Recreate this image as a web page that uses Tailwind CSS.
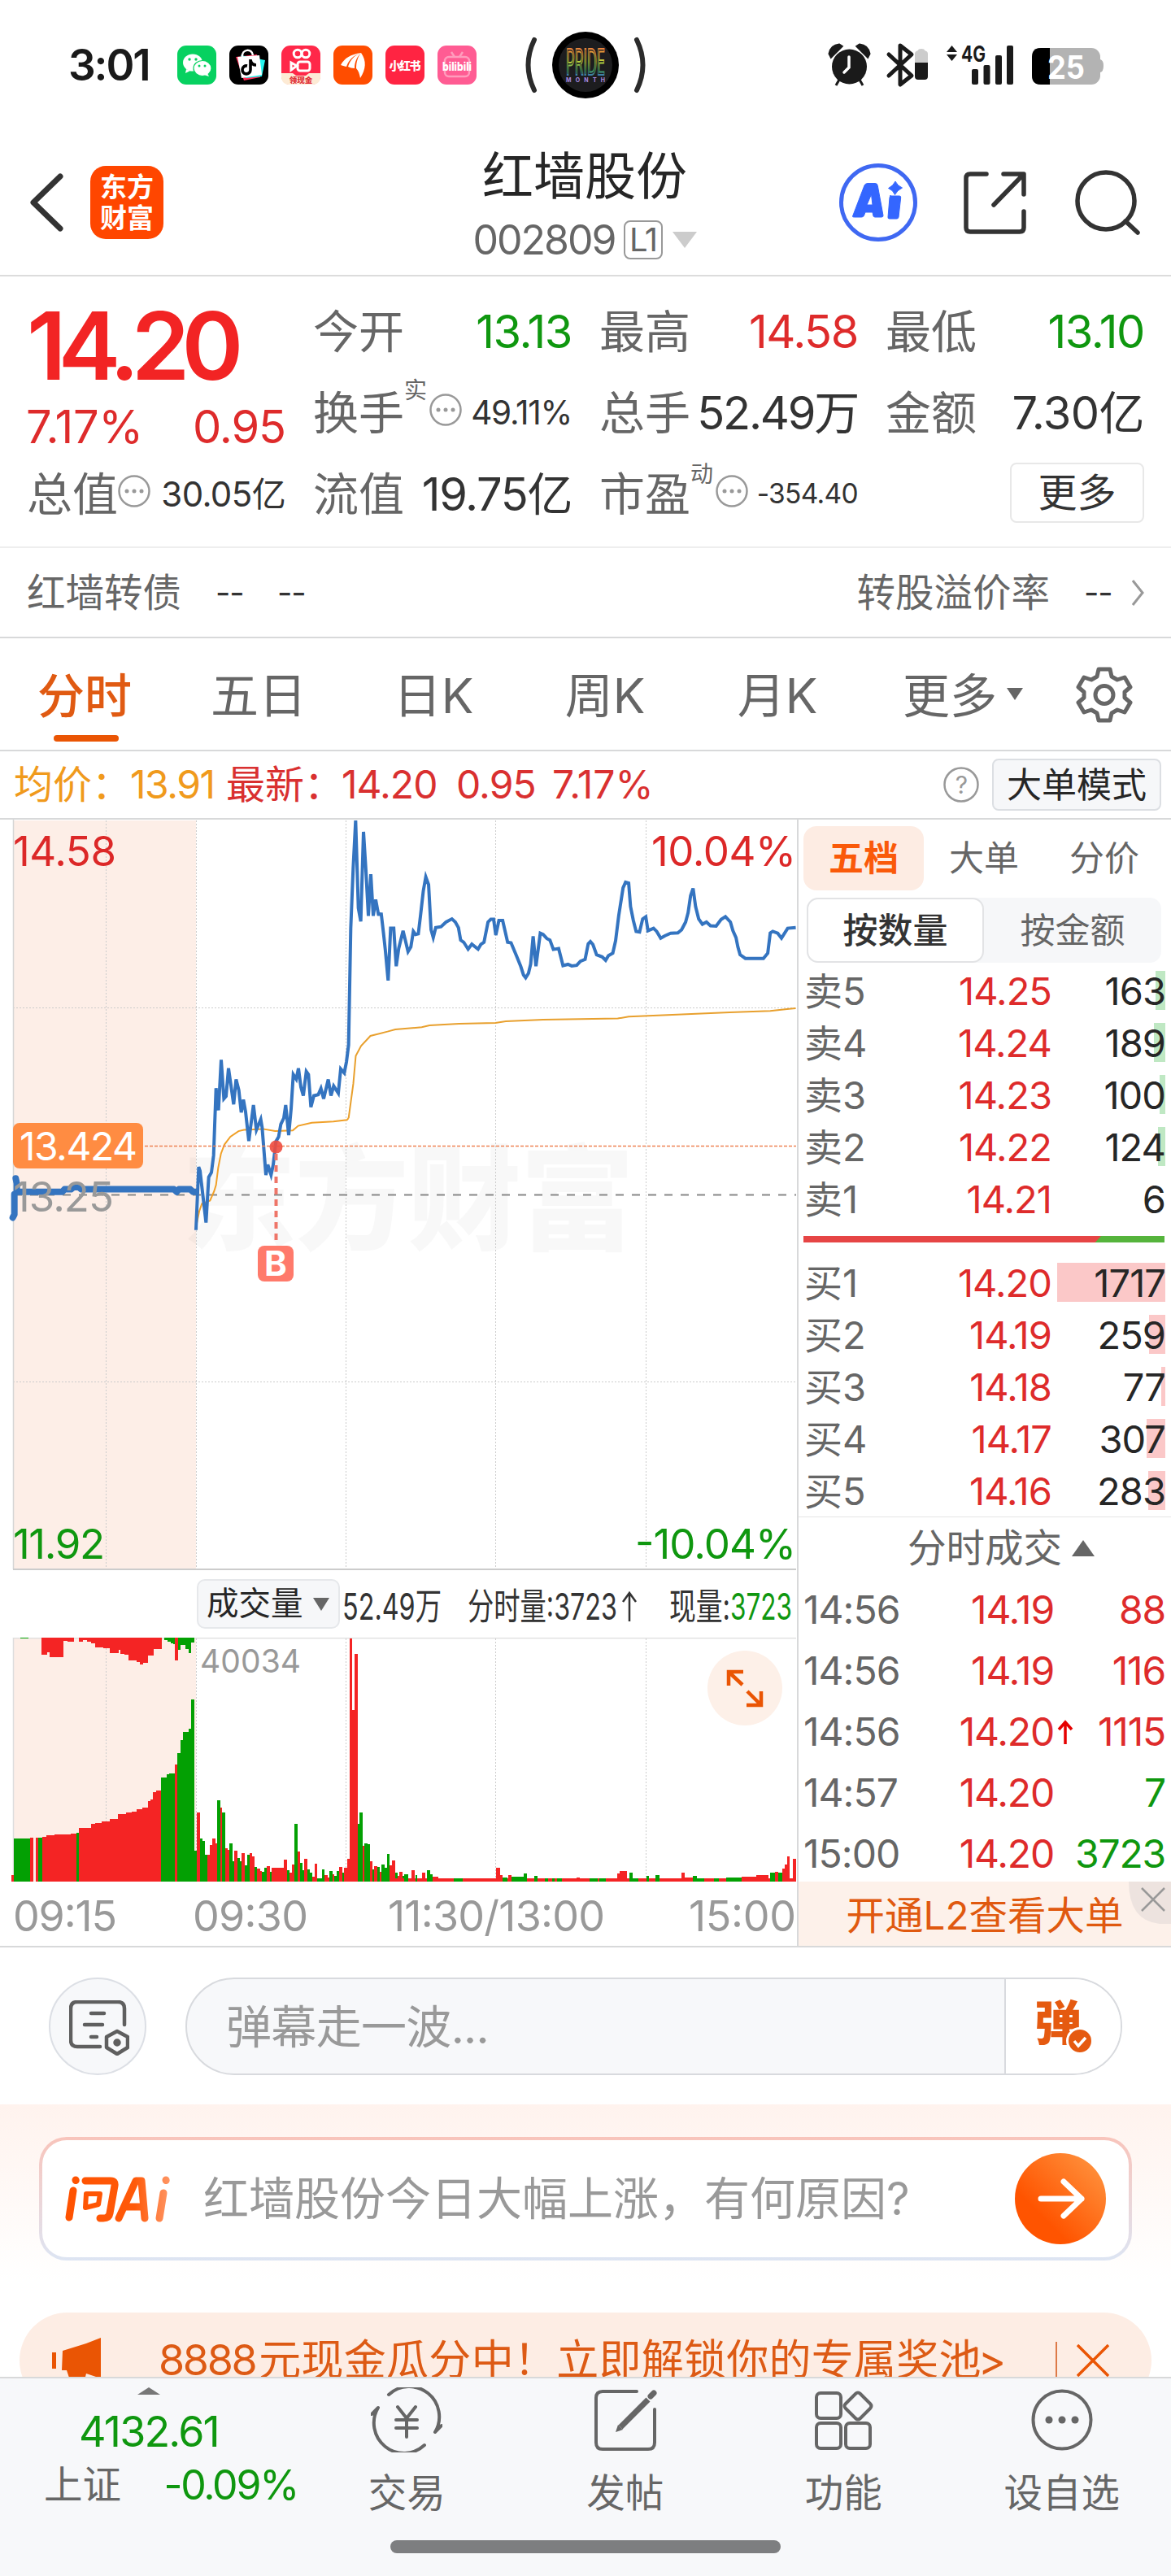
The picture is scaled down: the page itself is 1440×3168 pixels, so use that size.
<!DOCTYPE html>
<html lang="zh-CN">
<head>
<meta charset="utf-8">
<title>红墙股份 002809</title>
<script src="https://cdn.jsdelivr.net/npm/@tailwindcss/browser@4"></script>
</head>
<body class="w-[1440px] bg-white font-['Inter','Noto_Sans_CJK_SC',sans-serif] text-[#666] leading-none whitespace-nowrap">
<div class="flex h-[3168px] w-[1440px] flex-col overflow-hidden">

<!-- status bar -->
<header class="flex h-40 shrink-0 items-center pl-[84px]">
  <div class="w-[134px] text-[53px] font-semibold tracking-[-0.04em] text-[#1a1a1a]">3:01</div>
  <div class="flex gap-4">
    <svg class="size-12" viewBox="0 0 48 48"><rect width="48" height="48" rx="11" fill="#07d160"/><ellipse cx="19" cy="21" rx="12" ry="10.5" fill="#fff"/><path d="M11 29l-1 5 6-3z" fill="#fff"/><ellipse cx="31" cy="28" rx="11" ry="9.5" fill="#fff" stroke="#07d160" stroke-width="1.2"/><path d="M37 34l2 4-6-2z" fill="#fff"/><g fill="#07d160"><circle cx="15" cy="17" r="1.7"/><circle cx="23" cy="17" r="1.7"/><circle cx="27" cy="25" r="1.5"/><circle cx="34" cy="25" r="1.5"/></g></svg>
    <svg class="size-12" viewBox="0 0 48 48"><rect width="48" height="48" rx="11" fill="#000"/><path d="M8 14l26-3 4 28-20 4z" fill="#fe2c55"/><path d="M14 12l30 6-4 20-20 2z" fill="#25f4ee"/><path d="M10 14l27-2 3 24-25 4z" fill="#fff"/><path d="M16 14c-1-10 12-11 13-2" fill="none" stroke="#fff" stroke-width="2.5"/><path d="M26 17v13a5 5 0 1 1-4-5M26 18c1 4 3 6 7 6" fill="none" stroke="#000" stroke-width="3.6"/></svg>
    <svg class="size-12" viewBox="0 0 48 48"><rect width="48" height="48" rx="11" fill="#ff2849"/><path d="M0 34h14l4 3h12l4-3h14v5c0 5-4 9-9 9H9c-5 0-9-4-9-9z" fill="#fdebd5"/><g fill="none" stroke="#fff" stroke-width="3"><circle cx="20" cy="10" r="4.8"/><circle cx="30" cy="10" r="4.8"/><rect x="20" y="20" width="15" height="11" rx="3"/><path d="M19 25l-7-4v9z"/></g><text x="24" y="45.500" text-anchor="middle" font-size="9.500" font-weight="900" fill="#e0303a">领现金</text></svg>
    <svg class="size-12" viewBox="0 0 48 48"><rect width="48" height="48" rx="11" fill="#ff4d00"/><path d="M9 24c5-9 12-13 25-15-9 3-15 8-18 17-3-1-5-1-7-2zM18 26c3-9 8-14 16-17-5 5-8 11-8 19-3 0-6-1-8-2zM28 28c0-8 2-14 6-19 7 10 6 20-1 31-1-5-2-9-5-12z" fill="#fff"/></svg>
    <svg class="size-12" viewBox="0 0 48 48"><rect width="48" height="48" rx="11" fill="#ff2442"/><text x="24" y="30" text-anchor="middle" font-size="14" font-weight="900" fill="#fff" textLength="39">小红书</text></svg>
    <svg class="size-12" viewBox="0 0 48 48"><rect width="48" height="48" rx="11" fill="#ff5c93"/><g fill="none" stroke="#ff9cbd" stroke-width="2.5"><rect x="9" y="14" width="30" height="24" rx="5"/><path d="M17 8l4 6M31 8l-4 6"/></g><text x="24" y="31" text-anchor="middle" font-size="14" font-weight="800" fill="#fff" textLength="36" lengthAdjust="spacingAndGlyphs">bilibili</text></svg>
  </div>
  <svg class="ml-[58px] h-[84px] w-[152px]" viewBox="644 38 152 84">
    <defs><linearGradient id="pride" x1="0" y1="0" x2="0" y2="1"><stop offset="0" stop-color="#e2463f"/><stop offset=".3" stop-color="#e8a13a"/><stop offset=".5" stop-color="#b7cf3c"/><stop offset=".7" stop-color="#3f9e62"/><stop offset=".85" stop-color="#3d6fd0"/><stop offset="1" stop-color="#8a4cc0"/></linearGradient></defs>
    <path d="M657 49q-15 31 0 62M783 49q15 31 0 62" fill="none" stroke="#2b2b2b" stroke-width="6" stroke-linecap="round"/>
    <circle cx="720" cy="80" r="41" fill="#000"/><circle cx="720" cy="80" r="33" fill="#1d1d1f"/>
    <text x="696" y="92" font-size="44" textLength="48" lengthAdjust="spacingAndGlyphs" fill="#1d1d1f" stroke="url(#pride)" stroke-width="2">PRIDE</text>
    <text x="696" y="101" font-size="7" textLength="48" font-weight="700" fill="#a98be0">MONTH</text>
  </svg>
  <svg class="ml-[215px] h-[60px] w-[360px]" viewBox="1010 50 360 60">
    <g fill="#1a1a1a">
      <circle cx="1043.500" cy="82" r="21.500"/><path d="M1019 66q2-10 12-11l3 2-13 13zM1068 66q-2-10-12-11l-3 2 13 13zM1031 98l-4 7M1056 98l4 7" stroke="#1a1a1a" stroke-width="3"/>
      <path d="M1043 70v13l-6 6" stroke="#fff" stroke-width="3.500" fill="none" stroke-linecap="round"/>
      <path d="M1092 67l28 26-14 11V56l14 11-28 26" fill="none" stroke="#1a1a1a" stroke-width="5" stroke-linejoin="round" stroke-linecap="round"/>
      <path d="M1124 66q0-3 4-4 0-2 4-2t4 2q4 1 4 4v12h-16z" fill="#ccc"/><path d="M1124 77h16v17q0 4-4 4h-8q-4 0-4-4z"/>
      <path d="M1163 64l6.500-8 6.500 8zM1163 67h13l-6.500 8z"/>
      <text x="1181" y="76" font-size="27" font-weight="700" textLength="30" lengthAdjust="spacingAndGlyphs">4G</text>
      <rect x="1194" y="85" width="8" height="19" rx="2"/><rect x="1208.500" y="80" width="8" height="24" rx="2"/><rect x="1223" y="68" width="8" height="36" rx="2"/><rect x="1237" y="56" width="8" height="48" rx="2"/>
    </g>
    <rect x="1268" y="59" width="84" height="45" rx="11" fill="#b3b3b3"/><path d="M1352 73q4 1 4 8t-4 8z" fill="#b3b3b3"/><path d="M1290 59h-11q-11 0-11 11v23q0 11 11 11h11z" fill="#000"/>
    <text x="1287" y="97" font-size="40" font-weight="700" textLength="46" lengthAdjust="spacingAndGlyphs" fill="#fff">25</text>
  </svg>
</header>

<!-- title bar -->
<nav class="grid h-[180px] shrink-0 grid-cols-[1fr_auto_1fr] items-center border-b-2 border-[#dcdcdc] pr-[38px] pl-9">
  <div class="flex items-center gap-[33px]">
    <svg class="h-[76px] w-[42px]" viewBox="0 0 42 76" fill="none" stroke="#333" stroke-width="7" stroke-linecap="round" stroke-linejoin="round"><path d="M38 6L5 38l33 32"/></svg>
    <div class="grid size-[90px] place-content-center rounded-[19px] bg-[#ff4600] text-[33px] leading-[38px] font-bold text-white"><span>东方</span><span>财富</span></div>
  </div>
  <div class="flex flex-col items-center pt-[11px]">
    <h1 class="flex h-20 items-center text-[63px] text-[#262626]">红墙股份</h1>
    <div class="flex h-[76px] items-center">
      <span class="text-[50px] tracking-[-0.04em]">002809</span>
      <span class="ml-2.5 flex h-12 w-12 items-center justify-center rounded-lg border-2 border-[#999] text-[40px] tracking-[-0.05em]">L1</span>
      <svg class="ml-3 h-5 w-[30px]" viewBox="0 0 30 20"><path d="M0 0h30L15 20z" fill="#ccc"/></svg>
    </div>
  </div>
  <div class="flex items-center justify-end">
    <svg class="size-24" viewBox="0 0 96 96"><circle cx="48" cy="48" r="45.500" fill="none" stroke="#3f68f2" stroke-width="5"/><path d="M16.500 65L31 27q1-2.500 4-2.500h9q3 0 3.300 3L54 64q.2 2-2 2h-8q-2 0-2.200-2l-.8-4h-9l-1.500 4q-.8 2-3 2h-9q-2.500 0-2-1zM34 51h7l-1.500-13zM62 40h12q2 0 1.700 2L73 66q-.3 2-2.300 2h-9q-2 0-1.700-2l2-24q.2-2 2-2zM69 22q2.500 5.500 8.500 8-6.500 3-9 8.500-2-5.500-8-8 6-3 8.500-8.500z" fill="#3466ff" stroke="#3466ff" stroke-width="1" fill-rule="evenodd"/></svg>
    <svg class="ml-[57px] h-[77px] w-[78px]" viewBox="0 0 78 77" fill="none" stroke="#333" stroke-width="5.500" stroke-linecap="round" stroke-linejoin="round"><path d="M28 3H8q-5 0-5 5v61q0 5 5 5h61q5 0 5-5V49M49 3h25v25M73 4L37 41"/></svg>
    <svg class="ml-[59px] h-20 w-20" viewBox="0 0 80 80" fill="none" stroke="#333" stroke-width="5.500" stroke-linecap="round"><circle cx="38" cy="38" r="35"/><path d="M62 63l15 14"/></svg>
  </div>
</nav>

<!-- quote summary -->
<section class="grid h-[334px] shrink-0 grid-cols-4 grid-rows-[100px_100px_100px] gap-x-[34px] border-b-2 border-[#eee] px-[33px] pt-[18px] text-[56px] tracking-[-0.025em] text-[#333]">
  <div class="row-span-2">
    <div class="flex h-[134px] items-center text-[115px] font-semibold tracking-[-0.085em] text-[#f22424]">14.20</div>
    <div class="-ml-px flex h-[66px] items-center justify-between text-[#de2b2b]"><span class="tracking-[-0.005em]">7.17%</span><span class="tracking-[-0.02em]">0.95</span></div>
  </div>
  <div class="flex items-center justify-between"><span class="tracking-normal text-[#666]">今开</span><span class="tracking-[-0.025em] text-[#0f970f]">13.13</span></div>
  <div class="flex items-center justify-between"><span class="tracking-normal text-[#666]">最高</span><span class="text-[#de2b2b]">14.58</span></div>
  <div class="flex items-center justify-between"><span class="tracking-normal text-[#666]">最低</span><span class="tracking-[-0.025em] text-[#0f970f]">13.10</span></div>
  <div class="flex items-center"><span class="tracking-normal text-[#666]">换手</span><span class="mb-14 text-[28px] text-[#666]">实</span>
    <svg class="mb-2 ml-1 size-10 shrink-0" viewBox="0 0 40 40" fill="#999"><circle cx="20" cy="20" r="18.500" fill="none" stroke="#999" stroke-width="2.500"/><circle cx="11" cy="20" r="2.500"/><circle cx="20" cy="20" r="2.500"/><circle cx="29" cy="20" r="2.500"/></svg><span class="ml-auto text-[40.500px] tracking-[-0.03em]">49.11%</span></div>
  <div class="flex items-center justify-between"><span class="tracking-normal text-[#666]">总手</span><span class="tracking-[-0.04em]">52.49万</span></div>
  <div class="flex items-center justify-between"><span class="tracking-normal text-[#666]">金额</span><span class="tracking-[-0.01em]">7.30亿</span></div>
  <div class="flex items-center"><span class="tracking-normal text-[#666]">总值</span>
    <svg class="mb-2 size-10 shrink-0" viewBox="0 0 40 40" fill="#999"><circle cx="20" cy="20" r="18.500" fill="none" stroke="#999" stroke-width="2.500"/><circle cx="11" cy="20" r="2.500"/><circle cx="20" cy="20" r="2.500"/><circle cx="29" cy="20" r="2.500"/></svg><span class="ml-auto text-[42px] tracking-[-0.015em]">30.05亿</span></div>
  <div class="flex items-center justify-between"><span class="tracking-normal text-[#666]">流值</span><span>19.75亿</span></div>
  <div class="flex items-center"><span class="tracking-normal text-[#666]">市盈</span><span class="mb-[50px] text-[28px] text-[#666]">动</span>
    <svg class="mb-2 ml-1 size-10 shrink-0" viewBox="0 0 40 40" fill="#999"><circle cx="20" cy="20" r="18.500" fill="none" stroke="#999" stroke-width="2.500"/><circle cx="11" cy="20" r="2.500"/><circle cx="20" cy="20" r="2.500"/><circle cx="29" cy="20" r="2.500"/></svg><span class="ml-auto text-[33.500px] tracking-[-0.02em]">-354.40</span></div>
  <div class="flex items-center justify-end"><span class="-mt-1 flex h-[74px] w-[165px] items-center justify-center rounded-lg border-2 border-[#e8e8e8] text-[48px] tracking-normal">更多</span></div>
</section>

<!-- convertible bond -->
<section class="flex h-[111px] shrink-0 items-center border-b-2 border-[#d8d9da] pr-8 pl-[33px] text-[47.500px]">
  <span>红墙转债</span><span class="ml-[42px] w-[34px] text-[40px] tracking-[-0.03em] text-[#333]">--</span><span class="ml-[42px] w-[34px] text-[40px] tracking-[-0.03em] text-[#333]">--</span>
  <span class="ml-auto">转股溢价率</span><span class="ml-[42px] w-[34px] text-[40px] tracking-[-0.03em] text-[#333]">--</span>
  <svg class="ml-[25px] h-8 w-4" viewBox="0 0 16 32" fill="none" stroke="#999" stroke-width="3"><path d="M1 1l12 15L1 31"/></svg>
</section>

<!-- period tabs -->
<section class="flex h-[139px] shrink-0 items-center border-b-2 border-[#d8d9da] text-[59px]">
  <div class="relative flex h-full w-[212px] items-center justify-center pt-1 pr-1 text-[58px] font-medium text-[#e05a12]">分时<span class="absolute bottom-[10px] left-[66px] h-2 w-20 rounded-full bg-[#ea5504]"></span></div>
  <div class="w-[212px] pt-1 text-center">五日</div>
  <div class="w-[212px] pt-1 pl-1.5 text-center">日K</div>
  <div class="w-[212px] pt-1 pl-1 text-center">周K</div>
  <div class="w-[212px] pt-1 pl-1 text-center">月K</div>
  <div class="ml-[50px] pt-1 text-[58px]">更多</div>
  <svg class="ml-3 h-[15px] w-5" viewBox="0 0 20 15"><path d="M0 0h20L10 15z" fill="#666"/></svg>
  <svg class="mr-[47px] ml-auto size-[70px]" viewBox="0 0 70 70" fill="none" stroke="#666" stroke-width="5" stroke-linejoin="round"><path d="M28 4h14l2 9 7 4 9-3 7 12-7 6v7l7 6-7 12-9-3-7 4-2 9H28l-2-9-7-4-9 3-7-12 7-6v-7l-7-6 7-12 9 3 7-4z"/><circle cx="35" cy="35.500" r="11"/></svg>
</section>

<!-- averages line -->
<section class="flex h-[84px] shrink-0 items-center border-b-2 border-[#d8d9da] pr-3 pl-[17px] text-[48px] tracking-[-0.02em] text-[#d93030]">
  <span class="w-[143px] tracking-normal text-[#f09a1c]">均价：</span><span class="w-[118px] tracking-[-0.03em] text-[#f09a1c]">13.91</span>
  <span class="w-[142px] tracking-normal">最新：</span><span class="w-[141px]">14.20</span><span class="w-[118px]">0.95</span><span class="tracking-normal">7.17%</span>
  <svg class="mr-4 ml-auto size-11" viewBox="0 0 44 44"><circle cx="22" cy="22" r="20.500" fill="none" stroke="#999" stroke-width="2.500"/><text x="22" y="33" text-anchor="middle" font-size="30" fill="#999">?</text></svg>
  <span class="flex h-16 w-52 items-center justify-center rounded-lg border-2 border-[#dcdfe3] bg-[#f6f7f9] text-[43px] tracking-normal text-[#262626]">大单模式</span>
</section>

<!-- chart and order book -->
<section class="flex h-[1387px] shrink-0 border-b-2 border-[#d8d9da]">
  <div class="flex w-[980px] flex-col">
    <svg class="h-[923px] w-[980px] shrink-0" viewBox="0 1008 980 923" fill="none">
      <rect x="16" y="1009" width="225" height="920" fill="#fdeee7"/>
      <text x="224" y="1526" font-size="140" font-weight="900" textLength="556" fill="#000" fill-opacity=".028">东方财富</text>
      <g stroke="#ccc" stroke-width="1" stroke-dasharray="2 2"><path d="M130.500 1009v920M241.500 1009v920M425.500 1009v920M609.500 1009v920M794.500 1009v920M16 1239.500h963M16 1699.500h963"/></g>
      <path d="M16.500 1008v922" stroke="#d5d5d5" stroke-width="1.500"/><path d="M16 1930h963" stroke="#ccc" stroke-width="2"/>
      <path d="M17 1469.500h962" stroke="#888" stroke-width="2" stroke-dasharray="10 10"/>
      <g transform="translate(0 1000) scale(.33333 .38265)" stroke="#f0a028" stroke-width="2"><polyline vector-effect="non-scaling-stroke" points="723,1330 735,1280 745,1255 760,1250 775,1245 790,1215 797,1195 805,1140 815,1095 828,1065 850,1040 880,1022 900,1018 970,1015 1015,1022 1080,1020 1100,1005 1150,995 1230,991 1280,986 1286,980"/></g>
      <g transform="translate(400 1000) scale(.38265)" stroke="#e8a02e" stroke-width="2"><polyline vector-effect="non-scaling-stroke" points="75,980 90,870 98,780 115,748 145,716 200,702 225,695 310,688 335,682 430,677 547,674 580,669 700,664 940,660 975,654 1100,649 1300,640 1430,636 1490,629 1512,627"/></g>
      <g transform="translate(0 1000) scale(.33333 .38265)" stroke="#3474c0">
        <polyline vector-effect="non-scaling-stroke" stroke-width="4" points="723,1340 733,1137 738,1150 760,1316 770,1170 780,1155 788,1100 797,884 806,955 816,793 826,918 834,910 843,820 862,936 871,856 881,890 890,962 898,921 906,960 918,1054 935,938 946,1018 962,984 967,1010 981,1163 988,1130 1000,1163 1008,1130 1018,1055 1028,1040 1036,1000 1047,980 1054,938 1065,1035 1074,950 1082,840 1093,855 1101,820 1110,880 1119,908 1130,830 1138,840 1147,945 1158,908 1174,905 1184,885 1194,918 1211,856 1221,908 1231,877 1248,900 1257,822 1270,835 1278,800 1286,745 1294,370 1303,175 1312,24 1322,305 1331,348 1341,60 1350,185 1359,330 1368,196 1377,330 1386,278 1396,325 1406,325"/>
        <g stroke-width="8" stroke-linecap="round" stroke-linejoin="round"><polyline vector-effect="non-scaling-stroke" points="58,1174 62,1190 62,1217 230,1217 238,1209 262,1209 272,1202 290,1202 300,1209 642,1209 652,1217 660,1209 702,1209 712,1217 722,1217"/><polyline vector-effect="non-scaling-stroke" points="53,1225 53,1290 47,1300"/></g>
      </g>
      <g transform="translate(400 1000) scale(.38265)" stroke="#3474c0" stroke-width="4"><polyline vector-effect="non-scaling-stroke" points="168,325 180,325 187,385 193,440 202,538 210,370 220,370 228,492 236,435 250,378 266,445 275,430 283,380 290,390 299,388 306,330 315,250 323,205 332,230 340,375 347,400 355,368 372,365 388,350 407,340 418,350 428,368 435,408 445,415 459,437 471,421 491,437 500,422 510,415 523,350 532,341 541,341 548,392 558,345 570,345 586,415 597,417 615,460 628,492 637,520 644,529 653,515 660,485 668,396 677,492 691,386 700,390 712,403 722,408 733,438 750,435 764,490 780,486 792,491 808,489 820,476 835,470 845,420 852,413 860,422 872,455 890,462 901,473 910,458 924,450 933,410 943,330 957,240 965,222 975,225 981,300 990,345 999,380 1010,382 1020,340 1030,333 1037,378 1055,370 1065,380 1078,402 1092,394 1110,386 1133,385 1145,375 1158,350 1166,320 1174,265 1182,242 1190,300 1200,340 1212,357 1225,350 1238,362 1256,363 1272,342 1286,333 1302,350 1310,378 1320,400 1326,430 1333,455 1350,467 1408,467 1422,450 1430,385 1438,380 1454,386 1466,402 1486,370 1512,368"/></g>
      <path d="M16 1409.500h963" stroke="#ee8355" stroke-width="1.500" stroke-dasharray="4 2"/>
      <rect x="16" y="1381" width="160" height="56" rx="8" fill="#ff8c42"/>
      <path d="M339.500 1419v112" stroke="#ee7568" stroke-width="4" stroke-dasharray="8 6"/><circle cx="339.500" cy="1410.500" r="8" fill="#ee4b3e" fill-opacity=".9"/>
      <rect x="317" y="1532" width="44" height="44" rx="8" fill="#ff7a6b"/>
      <text x="339" y="1569" text-anchor="middle" font-size="42" font-weight="700" fill="#fff">B</text>
      <g font-size="51" lengthAdjust="spacingAndGlyphs">
        <text x="24" y="1427" font-size="48" textLength="145" fill="#fff">13.424</text>
        <text x="16" y="1490" textLength="124" fill="#999">13.25</text>
        <text x="16" y="1065" textLength="127" fill="#dc2828">14.58</text>
        <text x="801" y="1065" textLength="178" fill="#dc2828">10.04%</text>
        <text x="16" y="1917" textLength="113" fill="#0f970f">11.92</text>
        <text x="781" y="1917" textLength="198" fill="#0f970f">-10.04%</text>
      </g>
    </svg>
    <div class="flex h-[83px] shrink-0 items-center pl-[242px]">
      <div class="flex h-[61px] w-[176px] shrink-0 items-center rounded-[10px] border-2 border-[#e6e8eb] bg-[#f6f7f9] pl-2.5 text-[39.500px] text-[#262626]">成交量<svg class="ml-3 h-4 w-5" viewBox="0 0 20 16"><path d="M0 0h20L10 16z" fill="#666"/></svg></div>
      <svg class="h-[60px] w-[562px] shrink-0" viewBox="418 1942 562 60" font-size="45" fill="#333">
        <text x="421" y="1991" textLength="122" lengthAdjust="spacingAndGlyphs">52.49万</text>
        <text x="575" y="1991" textLength="184" lengthAdjust="spacingAndGlyphs">分时量:3723</text>
        <path d="M774 1993v-34M766 1969l8-11 8 11" fill="none" stroke="#333" stroke-width="2.500"/>
        <text x="823" y="1991" textLength="75" lengthAdjust="spacingAndGlyphs">现量:</text>
        <text x="898" y="1991" textLength="76" lengthAdjust="spacingAndGlyphs" fill="#0f970f">3723</text>
      </svg>
    </div>
    <svg class="h-[380px] w-[980px] shrink-0" viewBox="0 2014 980 380" fill="none">
      <rect x="16" y="2014" width="225" height="300" fill="#fdeee7"/>
      <path d="M130.500 2015v299M241.500 2015v299M425.500 2015v299M609.500 2015v299M794.500 2015v299" stroke="#ccc" stroke-dasharray="2 2"/>
      <path d="M16 2014.500h963M16.500 2014v300" stroke="#ddd" stroke-width="1.500"/>
      <g id="volume" transform="translate(0 1880) scale(.33333)" shape-rendering="crispEdges"></g>
      <circle cx="916" cy="2076" r="46" fill="#fdf0e8"/>
      <path d="M896 2073v-17h18M897 2057l16 15M936 2080v17h-18M935 2096l-16-16" stroke="#ea5504" stroke-width="4.500"/>
      <g fill="#999" font-size="52" lengthAdjust="spacingAndGlyphs">
        <text x="246" y="2057" font-size="39" textLength="124">40034</text>
        <text x="16" y="2375" textLength="128">09:15</text><text x="237" y="2375" textLength="142">09:30</text><text x="477" y="2375" textLength="267">11:30/13:00</text><text x="847" y="2375" textLength="132">15:00</text>
      </g>
    </svg>
  </div>

  <aside class="flex w-[460px] flex-col border-l-2 border-[#d8d9da]">
    <div class="mt-2 flex h-[79px] text-[43px]">
      <span class="ml-1.5 flex w-[148px] items-center justify-center rounded-2xl bg-[#fdece3] font-bold text-[#fa5a0a]">五档</span>
      <span class="flex w-[148px] items-center justify-center">大单</span><span class="flex w-[148px] items-center justify-center">分价</span>
    </div>
    <div class="mt-[9px] ml-2.5 flex h-20 w-[436px] rounded-[14px] bg-[#f6f7f9] text-[43px]">
      <span class="flex w-[218px] items-center justify-center rounded-[14px] border-2 border-[#e2e3e5] bg-white font-medium text-[#333]">按数量</span><span class="flex w-[218px] items-center justify-center">按金额</span>
    </div>
    <div id="asks" class="mt-0.5 pl-[7px]"></div>
    <div class="mt-[14px] ml-1.5 flex h-2 w-[444px] bg-[#55b43c]"><span class="w-[366px] bg-[#e64545] [clip-path:polygon(0_0,100%_0,98%_100%,0_100%)]"></span></div>
    <div id="bids" class="mt-[17px] pl-[7px]"></div>
    <div class="flex h-[76px] items-center border-t border-[#e5e5e5] pl-[134px] text-[47.500px]">分时成交<svg class="ml-3 h-5 w-7" viewBox="0 0 28 20"><path d="M0 20h28L14 0z" fill="#666"/></svg></div>
    <div id="trades" class="h-[373px] pl-1.5"></div>
    <div class="relative flex h-[79px] items-center justify-center bg-[#fdf1ea] text-[47.500px] text-[#e0590f]"><span class="mt-1">开通L2查看大单</span>
      <svg class="absolute top-0 right-0 size-[52px]" viewBox="0 0 52 52" fill="none"><path d="M0 0h52v52h-14Q0 48 0 0z" fill="#ede3df"/><path d="M16 8l28 28M44 8L16 36" stroke="#999" stroke-width="2.500"/></svg></div>
  </aside>
</section>

<!-- comment bar -->
<section class="flex h-[193px] shrink-0 items-start pt-[37px] pl-[60px]">
  <div class="flex size-[120px] items-center justify-center rounded-full border-2 border-[#dcdfe5] bg-[#f7f8fa]">
    <svg class="mt-1 ml-1 h-[68px] w-[74px]" viewBox="0 0 74 68" fill="none" stroke="#5f5f5f" stroke-width="4.500" stroke-linecap="round"><path d="M38 57H10q-8 0-8-8V10q0-8 8-8h50q8 0 8 8v20M27 16h16M19 30h22M27 45h7"/><path d="M59 38l13 7v13l-13 8-13-8V45z" stroke-linejoin="round"/><circle cx="59" cy="52" r="2.500" fill="#5f5f5f"/></svg>
  </div>
  <div class="ml-12 flex h-[120px] w-[1152px] overflow-hidden rounded-full border-2 border-[#d8dade] bg-[#f7f8fa]">
    <span class="flex flex-1 items-center pt-0.5 pl-12 text-[56px] tracking-[-0.012em] text-[#999]">弹幕走一波...</span>
    <span class="flex w-[143px] items-center border-l-2 border-[#d8dade] bg-white pl-9">
      <svg class="h-[70px] w-[72px]" viewBox="0 0 72 70"><text x="-1" y="52" font-size="58" font-weight="900" fill="#e55a10">弹</text><circle cx="55" cy="53" r="15.500" fill="#e55a10" stroke="#fff" stroke-width="3"/><path d="M48 53l5 6 9-10" fill="none" stroke="#fff" stroke-width="3.500"/></svg>
    </span>
  </div>
</section>

<!-- AI question and promotion -->
<section class="h-[335px] shrink-0 overflow-hidden bg-linear-to-b from-[#fff3ee] to-white to-65% px-6 pt-10">
  <div class="mx-6 h-[152px] rounded-[34px] bg-linear-to-b from-[#f8c4bb] to-[#dde5f3] p-1">
    <div class="flex h-full items-center rounded-[30px] bg-white px-7">
      <svg class="h-[60px] w-[132px]" viewBox="0 0 132 60"><defs><linearGradient id="ask" gradientUnits="userSpaceOnUse" x1="0" y1="0" x2="132" y2="0"><stop offset="0" stop-color="#ff5200"/><stop offset=".65" stop-color="#ff5a0a"/><stop offset="1" stop-color="#ff9a6a"/></linearGradient></defs><g fill="none" stroke="url(#ask)" stroke-width="9" stroke-linecap="round" stroke-linejoin="round"><path d="M10 20L5 53M13 7l.2 .5M25 8h31q6 0 5 6l-6 34q-1 6-8 6h-4"/><path d="M26 24h17l-2 13-16 4z" stroke-width="6"/><path d="M66 54L87 8h7l4 46M76 40h20" stroke-width="9"/><path d="M121 23l-5 31M124 7l.2 .5"/></g></svg>
      <span class="ml-[38px] text-[56px] text-[#999]">红墙股份今日大幅上涨，有何原因?</span>
      <svg class="ml-auto size-28" viewBox="0 0 112 112"><defs><linearGradient id="go" x1="1" y1="0" x2=".3" y2=".7"><stop offset="0" stop-color="#ff9a45"/><stop offset="1" stop-color="#ff5400"/></linearGradient></defs><circle cx="56" cy="56" r="56" fill="url(#go)"/><path d="M32 56h50M60 35l22 21-22 21" fill="none" stroke="#fff" stroke-width="7" stroke-linecap="round" stroke-linejoin="round"/></svg>
    </div>
  </div>
  <div class="mt-16 flex h-[118px] items-center rounded-full bg-[#fdede4] pr-[52px] pl-10 text-[52px] text-[#dd5a14]">
    <svg class="h-[56px] w-[60px]" viewBox="0 0 60 56" fill="#ea5504"><path d="M0 18h5v20H0zM13 16L42 7 60 0v50l-18-6-2 8H22l-4-12h-6z"/></svg>
    <span class="ml-[71px] tracking-[-0.045em]">8888</span><span class="ml-1 tracking-[0.005em]">元现金瓜分中！立即解锁你的专属奖池</span><span class="-ml-1">&gt;</span>
    <span class="ml-auto h-[46px] w-0.5 bg-[#dd7a48]"></span>
    <svg class="ml-6 size-10" viewBox="0 0 40 40" stroke="#ea5504" stroke-width="3.500"><path d="M1 1l38 38M39 1L1 39"/></svg>
  </div>
</section>

<!-- bottom navigation -->
<footer class="relative flex flex-1 border-t-2 border-[#d8d9da] bg-[#f7f8fa] text-[47.500px]">
  <div class="flex w-[366px] flex-col items-center pt-[11px]">
    <svg class="h-[9px] w-7" viewBox="0 0 28 9"><path d="M0 9h28L14 0z" fill="#777"/></svg>
    <div class="mt-5 text-[52px] tracking-[-0.035em] text-[#0f970f]">4132.61</div>
    <div class="mt-3.5 ml-[54px] flex w-[312px] items-center justify-between"><span>上证</span><span class="text-[50px] tracking-[-0.045em] text-[#0f970f]">-0.09%</span></div>
  </div>
  <div class="flex w-[268.500px] flex-col items-center gap-[26px] pt-[11px]">
    <svg class="h-20 w-[88px]" viewBox="0 0 88 80" fill="none" stroke="#666" stroke-width="4" stroke-linecap="round" stroke-linejoin="round"><path d="M22 9A37 37 0 0 1 79 55l8-8M66 71A37 37 0 0 1 9 25l-8 8M33 24l11 14 11-14M44 38v23M31 40h26M31 50h26"/></svg>交易</div>
  <div class="flex w-[268.500px] flex-col items-center gap-[26px] pt-[11px]">
    <svg class="size-20" viewBox="0 0 80 80" fill="none" stroke="#666" stroke-width="4" stroke-linecap="round"><path d="M54 5H12q-8 0-8 8v55q0 8 8 8h56q8 0 8-8V27"/><path d="M68 15L34 49" stroke-width="7" stroke-linecap="butt"/><path d="M31 46l6 6-9 3z" fill="#666" stroke="none"/><path d="M71 11l4-4" stroke-width="7"/></svg>发帖</div>
  <div class="flex w-[268.500px] flex-col items-center gap-[26px] pt-[11px]">
    <svg class="size-20" viewBox="0 0 80 80" fill="none" stroke="#666" stroke-width="4" stroke-linejoin="round"><rect x="7" y="7" width="30" height="31" rx="5"/><rect x="7" y="44" width="30" height="31" rx="5"/><rect x="43" y="44" width="30" height="31" rx="5"/><path d="M55 8q3-3 6 0l12 12q3 3 0 6L61 38q-3 3-6 0L43 26q-3-3 0-6z"/></svg>功能</div>
  <div class="flex w-[268.500px] flex-col items-center gap-[26px] pt-[11px]">
    <svg class="size-20" viewBox="0 0 80 80" fill="#666"><circle cx="40" cy="40" r="35.500" fill="none" stroke="#666" stroke-width="4"/><circle cx="24" cy="40" r="4.500"/><circle cx="40" cy="40" r="4.500"/><circle cx="56" cy="40" r="4.500"/></svg>设自选</div>
  <div class="absolute bottom-7 left-[480px] h-4 w-[480px] rounded-full bg-[#7d7e80]"></div>
</footer>
</div>

<script>
const RED = '#f42424', GREEN = '#03a003';
// hanging bars: unmatched auction volume [colour, x0, x1, bottom]
const hang = 'g75-105:405 r152-173:465 r173-182:457 r182-234:473 r234-250:414 r250-273:416 r292-305:417 r305-320:411 r320-335:418 r335-350:423 r350-380:437 r380-405:440 r405-437:459 r437-445:448 r445-460:461 r460-475:466 r475-505:487 r505-515:493 r515-527:501 r527-547:495 r547-567:469 r567-597:443 g605-617:410 g617-630:416 g630-638:423 g638-645:427 r645-657:485 g657-667:447 g667-685:429 g685-695:443 g695-706:460 g706-717:419';
// standing bars: [colour, x0, x1, top]
const stand = 'r42-52:1278 g52-112:1142 r112-124:1141 r132-142:1141 g142-155:1141 r155-172:1138 r172-200:1131 r200-262:1128 r262-282:1125 g282-292:1122 r292-335:1103 r335-350:1090 r350-375:1086 r375-405:1080 r405-435:1070 r435-465:1054 r465-485:1048 r485-505:1043 r505-525:1036 r525-545:1029 r545-555:1005 r555-565:999 r565-575:972 r575-595:965 g595-615:917 g615-625:906 g625-645:903 r645-655:869 g655-665:829 g665-675:780 g675-695:751 g695-705:738 g705-717:630 g717-726:1188 r726-738:1047 g738-748:1142 g748-757:1151 g757-764:1203 r764-773:1203 r773-782:1166 r782-794:1142 r794-800:1160 g800-812:1002 r812-820:1030 g820-830:1048 r830-840:1178 r840-847:1186 g847-858:1160 g858-865:1227 r865-876:1187 g876-885:1215 g885-892:1227 r892-903:1197 g903-911:1243 g911-920:1203 r920-931:1198 r931-940:1209 g940-949:1248 r949-960:1254 r960-967:1263 g967-976:1266 g976-985:1251 r985-996:1245 g996-1003:1266 r1003-1048:1252 r1048-1060:1220 g1060-1068:1260 r1068-1077:1270 r1077-1086:1240 g1086-1097:1090 r1097-1106:1192 g1106-1115:1233 g1115-1122:1260 r1122-1134:1217 g1134-1143:1257 g1143-1152:1270 r1152-1160:1284 r1160-1170:1237 g1170-1187:1290 g1187-1198:1257 r1198-1208:1278 r1208-1215:1288 g1215-1226:1263 r1226-1233:1276 g1233-1243:1282 g1243-1252:1263 r1252-1262:1248 g1262-1270:1269 r1270-1280:1252 r1280-1289:1217 r1289-1300:405 r1300-1307:670 r1307-1319:463 g1319-1325:1090 g1325-1337:1048 r1337-1345:1170 g1345-1356:1160 g1356-1364:1163 r1364-1373:1226 g1373-1380:1258 r1380-1392:1246 g1392-1400:1248 r1400-1408:1267 g1408-1419:1239 g1419-1427:1251 g1427-1438:1201 r1438-1446:1243 r1446-1457:1225 g1457-1466:1269 r1466-1473:1281 r1473-1484:1267 g1484-1490:1280 r1440-2938:1291 g1490-1505:1276 r1517-1530:1260 g1532-1538:1278 r1556-1570:1270 g1576-1587:1260 g1587-1596:1276 r1596-1618:1285 g1673-1706:1289 r1831-1844:1251 r1844-1853:1278 g1853-1872:1288 r1875-1886:1277 g1886-1932:1285 g1932-1945:1272 g1972-1982:1280 g2009-2022:1290 g2037-2046:1290 g2055-2074:1290 r2128-2138:1286 g2175-2206:1289 g2212-2235:1290 r2278-2289:1273 r2285-2300:1262 r2300-2313:1264 g2321-2333:1270 g2333-2355:1290 g2384-2393:1282 g2419-2432:1278 r2514-2527:1268 r2527-2557:1287 g2557-2571:1282 g2571-2597:1290 g2634-2652:1290 g2680-2735:1286 r2735-2790:1285 r2790-2836:1277 g2842-2858:1270 r2858-2872:1266 g2872-2885:1270 r2885-2894:1255 r2894-2903:1240 r2903-2912:1210 r2924-2937:1218';
const bars = (list, hanging) => list.split(' ').map(s => {
  const [, c, a, b, y] = s.match(/(\w)(\d+)-(\d+):(\d+)/);
  return `<rect x="${a}" width="${b - a}" y="${hanging ? 403 : y}" height="${hanging ? y - 403 : 1302 - y}" fill="${c === 'r' ? RED : GREEN}"/>`;
}).join('');
document.getElementById('volume').innerHTML = bars(hang, true) + bars(stand, false);

const book = (id, side, colour, rows) => {
  document.getElementById(id).innerHTML = rows.map(([n, price, vol, w]) => `
    <div class="relative flex h-16 items-center pr-[7px] text-[47px] tracking-[-0.02em]">
      <span class="absolute right-[7px] top-2 h-12 ${colour}" style="width:${w}px"></span>
      <span class="w-[150px] tracking-normal">${side}${n}</span><span class="w-[154px] text-right text-[#de2b2b]">${price}</span><span class="relative flex-1 text-right text-[#262626]">${vol}</span>
    </div>`).join('');
};
book('asks', '卖', 'bg-[#bfe8c3]', [[5, '14.25', 163, 12], [4, '14.24', 189, 14], [3, '14.23', 100, 7], [2, '14.22', 124, 9], [1, '14.21', 6, 0]]);
book('bids', '买', 'bg-[#fbc8c8]', [[1, '14.20', 1717, 133], [2, '14.19', 259, 20], [3, '14.18', 77, 5], [4, '14.17', 307, 23], [5, '14.16', 283, 21]]);

document.getElementById('trades').innerHTML = [
  ['14:56', '14.19', 88], ['14:56', '14.19', 116], ['14:56', '14.20', 1115, 1], ['14:57', '14.20', 7], ['15:00', '14.20', 3723]
].map(([t, p, v, up], i) => `
  <div class="flex h-[75px] items-center pr-[7px] pt-0.5 text-[48px] tracking-[-0.025em]">
    <span class="w-[150px] tracking-[-0.02em]">${t}</span><span class="w-[158px] text-right text-[#de2b2b]">${p}</span>
    <svg class="ml-1 h-[30px] w-5" viewBox="0 0 20 30" fill="none" stroke="#e60000" stroke-width="3.500">${up ? '<path d="M10 30V3M2 12l8-9 8 9"/>' : ''}</svg>
    <span class="flex-1 text-right ${i > 2 ? 'text-[#0f970f]' : 'text-[#de2b2b]'}">${v}</span>
  </div>`).join('');
</script>
</body>
</html>
